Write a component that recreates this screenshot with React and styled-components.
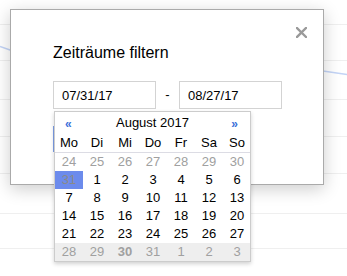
import React from "react";
import styled, { createGlobalStyle } from "styled-components";

const GlobalStyle = createGlobalStyle`
  html, body { margin: 0; padding: 0; background: #fff; }
  body { font-family: "Liberation Sans", Arial, sans-serif; color: #000; }
  * { box-sizing: border-box; }
`;

const Page = styled.div`
  position: relative;
  width: 347px;
  height: 276px;
  overflow: hidden;
  background: #fff;
`;

const Chart = styled.svg`
  position: absolute;
  left: 0;
  top: 0;
  width: 347px;
  height: 276px;
`;

const Modal = styled.div`
  position: absolute;
  left: 10px;
  top: 9px;
  width: 314px;
  height: 176px;
  background: #fff;
  border: 1px solid #aaaaaa;
  box-shadow: 0 4px 16px rgba(0, 0, 0, 0.2);
  padding: 34px 0 0 42px;
`;

const CloseButton = styled.button`
  position: absolute;
  top: 17px;
  right: 16px;
  width: 11px;
  height: 11px;
  padding: 0;
  border: 0;
  background: none;
  display: flex;
  cursor: pointer;
`;

const Title = styled.h2`
  margin: 0;
  font-size: 16px;
  font-weight: normal;
  line-height: 18px;
  color: #000;
`;

const RangeRow = styled.div`
  display: flex;
  align-items: center;
  margin-top: 19px;
`;

const FieldWrap = styled.div`
  position: relative;
`;

const DateField = styled.input`
  display: block;
  width: 103px;
  height: 28px;
  border: 1px solid #d3d3d3;
  padding: 0 8px;
  margin: 0;
  font: 13px "Liberation Sans", Arial, sans-serif;
  color: #000;
  background: #fff;
  outline: none;
`;

const Dash = styled.span`
  width: 23px;
  text-align: center;
  font-size: 13px;
  line-height: 28px;
`;

const FocusMark = styled.div`
  position: absolute;
  left: 42px;
  top: 116px;
  width: 1px;
  height: 26px;
  background: #7d9fe8;
`;

const Calendar = styled.div`
  position: absolute;
  left: 1px;
  top: calc(100% + 2px);
  width: 197px;
  background: #fff;
  border: 1px solid #cccccc;
  box-shadow: 0 2px 4px rgba(0, 0, 0, 0.18);
  z-index: 2;
`;

const CalHeader = styled.div`
  display: flex;
  align-items: center;
  justify-content: space-between;
  height: 22px;
  padding: 0 12px 0 10px;
`;

const NavArrow = styled.span`
  color: #3b6fd9;
  font-size: 12px;
  font-weight: bold;
  line-height: 22px;
  padding-top: 2px;
  cursor: pointer;
`;

const MonthLabel = styled.span`
  font-size: 13px;
  line-height: 22px;
  padding-left: 2px;
`;

const Grid = styled.div`
  display: grid;
  grid-template-columns: repeat(7, 28px);
`;

const WeekdayRow = styled(Grid)`
  border-bottom: 1px solid #dcdce4;
`;

const Weekday = styled.div`
  height: 18px;
  line-height: 18px;
  text-align: center;
  font-size: 13px;
`;

const WeekRow = styled(Grid)`
  background: ${(p) => (p.$shaded ? "#eeeeee" : "transparent")};
`;

const Day = styled.div`
  height: 18px;
  line-height: 18px;
  text-align: center;
  font-size: 13px;
  color: ${(p) => (p.$selected ? "#8a8a8a" : p.$muted ? "#a0a0a0" : "#000")};
  background: ${(p) => (p.$selected ? "#6c8bec" : "transparent")};
  font-weight: ${(p) => (p.$today ? "bold" : "normal")};
`;

const weekdays = ["Mo", "Di", "Mi", "Do", "Fr", "Sa", "So"];

const weeks = [
  [24, 25, 26, 27, 28, 29, 30].map((d) => ({ d, muted: true })),
  [{ d: 31, muted: true, selected: true }, ...[1, 2, 3, 4, 5, 6].map((d) => ({ d }))],
  [7, 8, 9, 10, 11, 12, 13].map((d) => ({ d })),
  [14, 15, 16, 17, 18, 19, 20].map((d) => ({ d })),
  [21, 22, 23, 24, 25, 26, 27].map((d) => ({ d })),
  [28, 29, 30, 31, 1, 2, 3].map((d) => ({ d, muted: true, today: d === 30 })),
];

const gridLines = [24, 60, 99, 136, 173, 213, 248];

export default function App() {
  return (
    <>
      <GlobalStyle />
      <Page>
        <Chart viewBox="0 0 347 276">
          {gridLines.map((y) => (
            <line key={y} x1="0" x2="347" y1={y + 0.5} y2={y + 0.5} stroke="#efefef" strokeWidth="1" />
          ))}
          <polyline
            points="0,46.5 10,50 323,71 347,74.5"
            fill="none"
            stroke="#c3d4f6"
            strokeWidth="1.5"
          />
        </Chart>
        <Modal>
          <CloseButton aria-label="Schließen">
            <svg width="11" height="11" viewBox="0 0 11 11">
              <path d="M1 1 L10 10 M10 1 L1 10" stroke="#9a9a9a" strokeWidth="2.4" strokeLinecap="square" />
            </svg>
          </CloseButton>
          <Title>Zeiträume filtern</Title>
          <RangeRow>
            <FieldWrap>
              <DateField readOnly defaultValue="07/31/17" />
              <Calendar>
                <CalHeader>
                  <NavArrow>«</NavArrow>
                  <MonthLabel>August 2017</MonthLabel>
                  <NavArrow>»</NavArrow>
                </CalHeader>
                <WeekdayRow>
                  {weekdays.map((w) => (
                    <Weekday key={w}>{w}</Weekday>
                  ))}
                </WeekdayRow>
                {weeks.map((week, i) => (
                  <WeekRow key={i} $shaded={i === weeks.length - 1}>
                    {week.map((c, j) => (
                      <Day key={j} $muted={c.muted} $selected={c.selected} $today={c.today}>
                        {c.d}
                      </Day>
                    ))}
                  </WeekRow>
                ))}
              </Calendar>
            </FieldWrap>
            <Dash>-</Dash>
            <DateField readOnly defaultValue="08/27/17" />
          </RangeRow>
          <FocusMark />
        </Modal>
      </Page>
    </>
  );
}
